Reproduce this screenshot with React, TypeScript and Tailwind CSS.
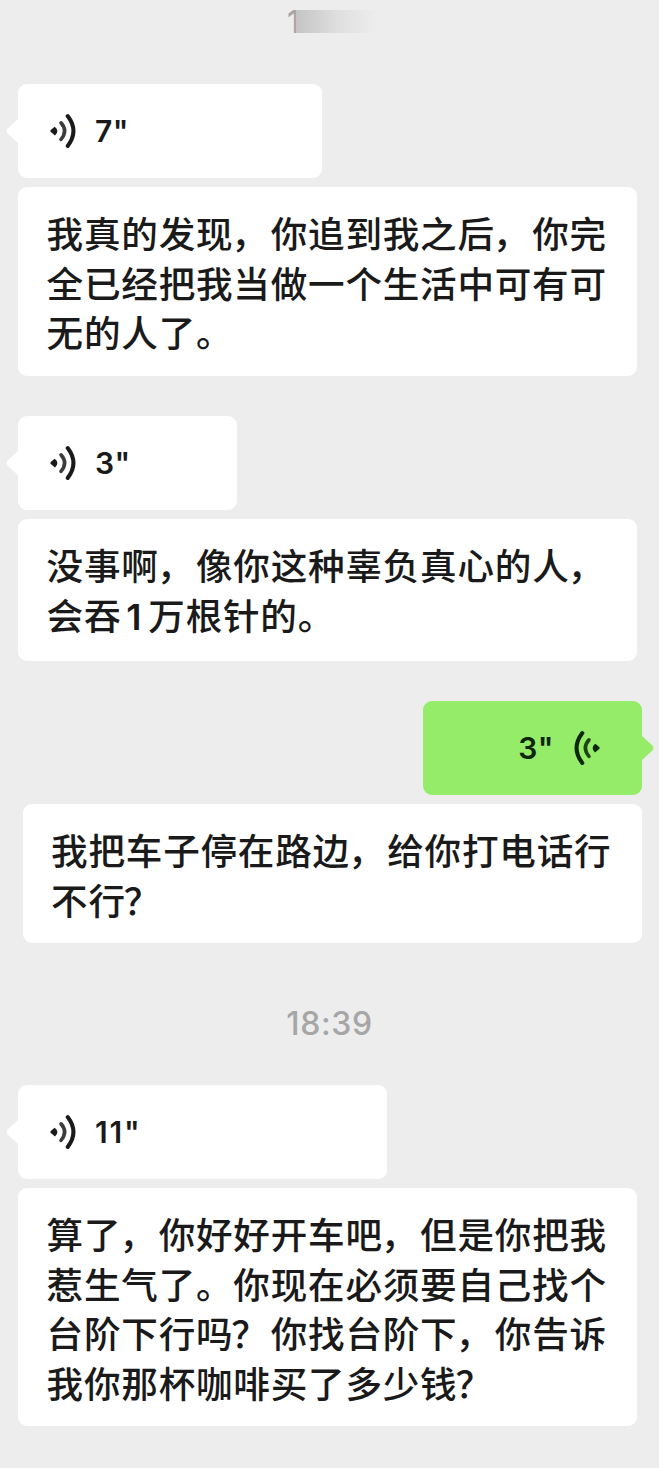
import React from 'react';

interface VoiceBubbleProps {
  seconds: number;
  width: string;
  mine?: boolean;
}

interface TranscriptProps {
  lines: string[];
  className?: string;
}

const VoiceIcon: React.FC<{ className?: string }> = ({ className = '' }) => (
  <svg width="26" height="36" viewBox="0 0 26 36" fill="none" className={className}>
    <path
      d="M0.8 17 L4.6 13.7 Q7.4 15.5 7.4 18 Q7.4 20.5 5 22.6 L0.8 19 Q-0.2 18 0.8 17Z"
      fill="currentColor"
    />
    <path d="M11 9.8 Q18.2 18 11 26.4" stroke="currentColor" strokeWidth="3.6" strokeLinecap="round" opacity="0.85" />
    <path d="M17.7 3 Q29.2 18 17.7 33" stroke="currentColor" strokeWidth="4" strokeLinecap="round" />
  </svg>
);

const BubbleTail: React.FC<{ className: string }> = ({ className }) => (
  <svg width="13" height="26" viewBox="0 0 13 26" className={`absolute top-[34px] ${className}`}>
    <path d="M13 0 L1.6 10.6 Q-0.4 13 1.6 15.4 L13 26Z" fill="currentColor" />
  </svg>
);

const VoiceBubble: React.FC<VoiceBubbleProps> = ({ seconds, width, mine }) => (
  <div
    className={`relative flex h-[94px] items-center rounded-[9px] ${width} ${
      mine ? 'ml-auto mr-[17px] flex-row-reverse bg-[#95ec69] pr-[42px]' : 'ml-[18px] bg-white pl-8'
    }`}
  >
    <BubbleTail
      className={mine ? '-right-[12px] -scale-x-100 text-[#95ec69]' : '-left-[12px] text-white'}
    />
    <VoiceIcon className={mine ? '-scale-x-100 text-[#0d2606]' : 'text-[#1a1a1a]'} />
    <span
      className={`font-[Inter] text-[30px] font-semibold leading-none ${
        mine ? 'mr-[20px] text-[#0d2606]' : 'ml-[19px] text-[#1a1a1a]'
      } ${seconds > 9 ? 'tracking-[1.8px]' : 'tracking-[0.5px]'}`}
    >
      {seconds}"
    </span>
  </div>
);

// Digits use the latin face, and the wide punctuation sits tight to the previous character
const renderLine = (line: string) =>
  line.split(/(\d+|，|？)/).map((part, i) => {
    if (/^\d+$/.test(part)) {
      return (
        <span key={i} className="ml-[5px] mr-[6px] font-[Inter] text-[36px] font-semibold leading-none">
          {part}
        </span>
      );
    }
    if (part === '，') {
      return (
        <span key={i} className="inline-block -translate-x-[2px] leading-none">
          {part}
        </span>
      );
    }
    if (part === '？') {
      return (
        <span key={i} className="inline-block -translate-x-[2px] leading-none">
          {part}
        </span>
      );
    }
    return part;
  });

const Transcript: React.FC<TranscriptProps> = ({ lines, className = '' }) => (
  <div
    className={`w-[619px] rounded-[9px] bg-white pl-[28.6px] pt-[21px] font-['Noto_Sans_CJK_SC',sans-serif] text-[36.6px] font-medium leading-[49.7px] tracking-[0.77px] text-[#1a1a1a] ${className}`}
  >
    {lines.map((line) => (
      <p key={line} className="h-[49.7px] whitespace-nowrap">
        {renderLine(line)}
      </p>
    ))}
  </div>
);

export default function App() {
  return (
    <main className="h-[1468px] w-[659px] overflow-hidden bg-[#ededed]">
      <div className="flex h-[84px] items-start pl-[287px] pt-[7px]">
        <span className="font-[Inter] text-[31px] font-medium leading-[30px] text-[#a6a6a6]">1</span>
        <div className="relative -ml-[4px] mt-[3px] h-[23px] w-20 bg-linear-to-r from-[#c4c4c4] via-[#dedede] to-[#ededed]" />
      </div>

      <VoiceBubble seconds={7} width="w-[304px]" />
      <Transcript
        className="ml-[18px] mt-[9px] h-[189px]"
        lines={['我真的发现，你追到我之后，你完', '全已经把我当做一个生活中可有可', '无的人了。']}
      />

      <div className="h-10" />
      <VoiceBubble seconds={3} width="w-[219px]" />
      <Transcript
        className="ml-[18px] mt-[9px] h-[142px]"
        lines={['没事啊，像你这种辜负真心的人，', '会吞1万根针的。']}
      />

      <div className="h-10" />
      <VoiceBubble seconds={3} width="w-[219px]" mine />
      <Transcript
        className="ml-[22.5px] mt-[9px] h-[139px]"
        lines={['我把车子停在路边，给你打电话行', '不行？']}
      />

      <div className="flex h-[142px] items-center justify-center pt-[19px] font-[Inter] text-[32px] font-medium leading-none tracking-[0.6px] text-[#a6a6a6]">
        18:39
      </div>

      <VoiceBubble seconds={11} width="w-[369px]" />
      <Transcript
        className="ml-[18px] mt-[9px] h-[238px]"
        lines={[
          '算了，你好好开车吧，但是你把我',
          '惹生气了。你现在必须要自己找个',
          '台阶下行吗？你找台阶下，你告诉',
          '我你那杯咖啡买了多少钱？',
        ]}
      />
    </main>
  );
}
